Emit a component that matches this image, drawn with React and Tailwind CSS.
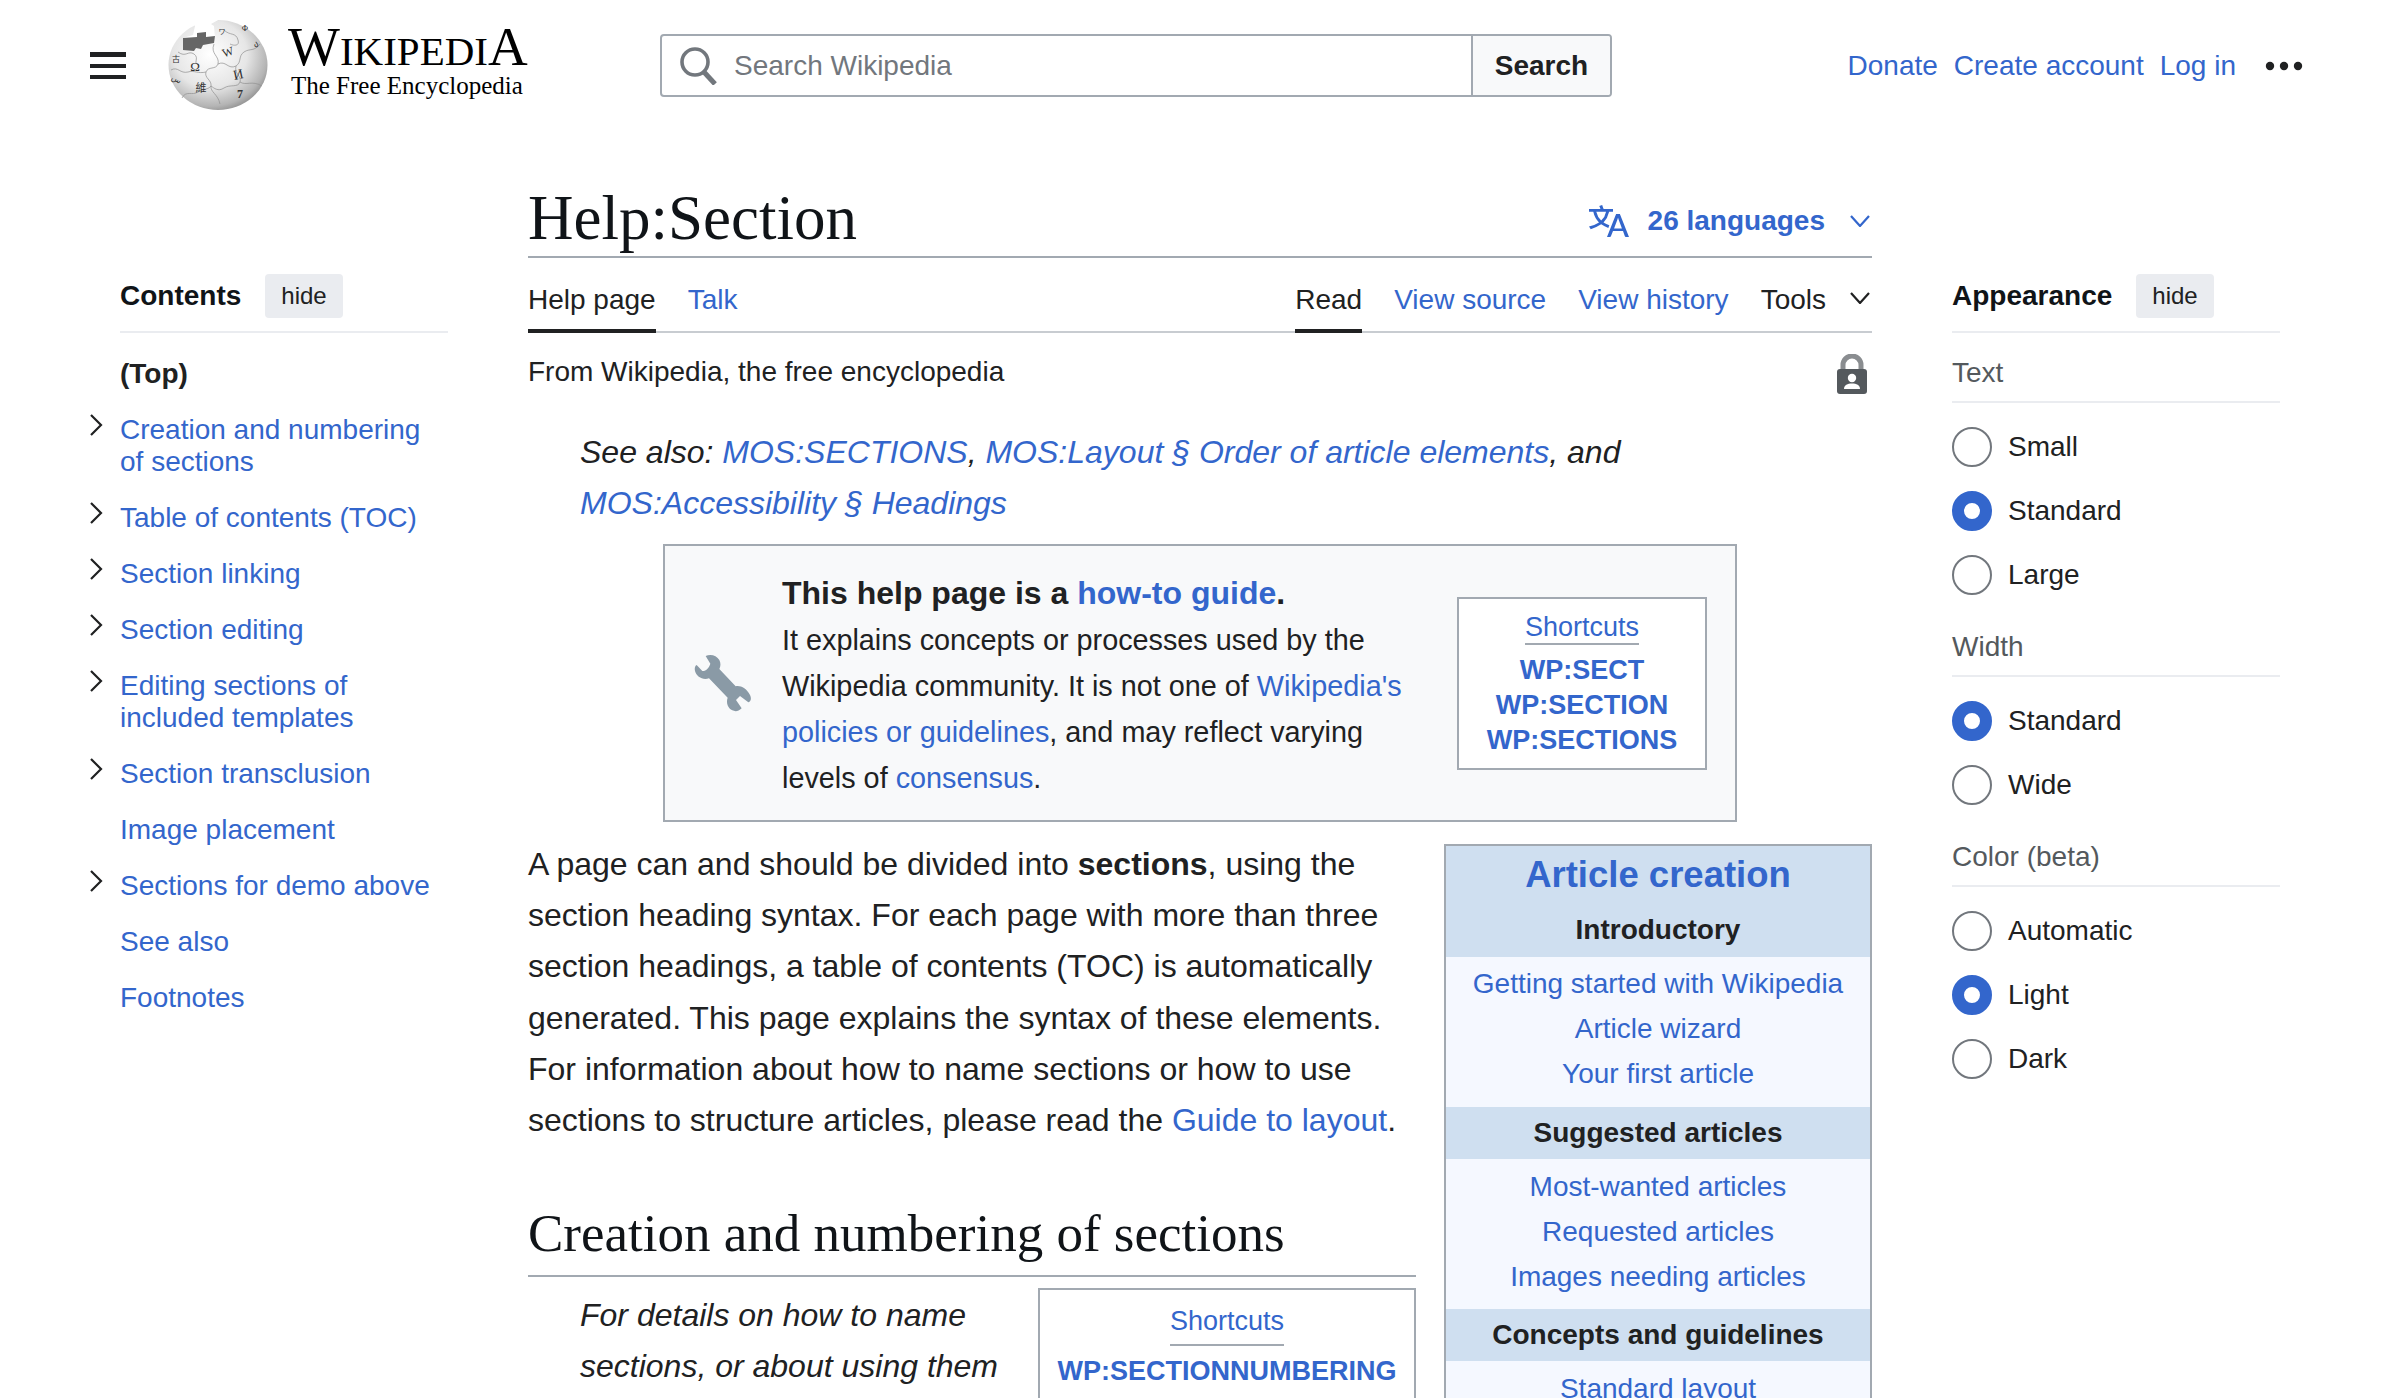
import React from 'react';

const tocItems = [
  { label: 'Creation and numbering of sections', arrow: true },
  { label: 'Table of contents (TOC)', arrow: true },
  { label: 'Section linking', arrow: true },
  { label: 'Section editing', arrow: true },
  { label: 'Editing sections of included templates', arrow: true },
  { label: 'Section transclusion', arrow: true },
  { label: 'Image placement', arrow: false },
  { label: 'Sections for demo above', arrow: true },
  { label: 'See also', arrow: false },
  { label: 'Footnotes', arrow: false },
];

const appearance = [
  { title: 'Text', options: [['Small', false], ['Standard', true], ['Large', false]] },
  { title: 'Width', options: [['Standard', true], ['Wide', false]] },
  { title: 'Color (beta)', options: [['Automatic', false], ['Light', true], ['Dark', false]] },
];

const navbox = [
  { title: 'Introductory', links: ['Getting started with Wikipedia', 'Article wizard', 'Your first article'] },
  { title: 'Suggested articles', links: ['Most-wanted articles', 'Requested articles', 'Images needing articles'] },
  { title: 'Concepts and guidelines', links: ['Standard layout'] },
];

const A = ({ children, className = '' }) => <a className={`text-[#3366cc] ${className}`}>{children}</a>;

const Chevron = ({ className = 'text-[#202122]' }) => (
  <svg width="20" height="12" viewBox="0 0 20 12" fill="none" stroke="currentColor" strokeWidth="2.2" className={className}>
    <path d="M1 1l9 10 9-10" />
  </svg>
);

const Globe = () => (
  <svg width="100" height="90" viewBox="0 0 100 90" className="shrink-0">
    <defs>
      <radialGradient id="globe" cx="0.42" cy="0.38" r="0.68">
        <stop offset="0" stopColor="#ffffff" />
        <stop offset="0.55" stopColor="#e6e6e6" />
        <stop offset="0.85" stopColor="#b4b4b4" />
        <stop offset="1" stopColor="#858585" />
      </radialGradient>
    </defs>
    <ellipse cx="50" cy="45" rx="49.5" ry="45" fill="url(#globe)" />
    <path d="M24 -1L27 6 25 15 15 18 15 30 47 18 46 6 43 4 52 -1z" fill="#fff" />
    <path d="M0 25L8 8 22 1 14 1 0 10z" fill="#fff" />
    <path d="M15 18L29 17 29 13 38 12 38 17 47 16 46 23 35 25 33 29 28 28 26 31 15 30z" fill="#666" />
    <g fill="none" stroke="#8f8f8f" strokeWidth="0.7">
      <path d="M10 32C18 38 20 30 26 34 32 38 24 44 31 45M46 24C42 34 52 36 50 44 48 50 40 46 38 52 36 58 44 60 43 66 42 72 50 74 52 84" />
      <path d="M50 44C58 40 60 50 68 46 74 42 70 36 76 32 82 28 86 32 92 24M68 46C66 54 74 56 72 62 70 68 62 64 56 68 50 72 46 68 43 66M72 62C78 66 84 60 94 66" />
      <path d="M3 50C10 46 12 54 20 52 26 50 30 54 38 52M14 78C18 70 24 76 30 72 36 68 40 70 43 66M56 10C62 16 68 12 70 20 72 26 66 26 62 24" />
    </g>
    <g fill="#333" fontFamily="'Liberation Serif', serif" textAnchor="middle">
      <text x="27" y="51" fontSize="13">Ω</text>
      <text x="60" y="36" fontSize="12" transform="rotate(-18 60 32)">W</text>
      <text x="70" y="59" fontSize="14" transform="rotate(-12 70 53)">И</text>
      <text x="33" y="72" fontSize="11" fontFamily="'Noto Sans CJK TC', sans-serif">維</text>
      <text x="72" y="78" fontSize="12" fontWeight="700">7</text>
      <text x="54" y="14" fontSize="7" fontFamily="'Noto Sans CJK JP', sans-serif">ワ</text>
      <text x="88" y="27" fontSize="9">ა</text>
      <text x="8" y="42" fontSize="8" fontFamily="'Noto Sans CJK SC', sans-serif">古</text>
      <text x="8" y="62" fontSize="8" transform="rotate(30 8 60)">&#1587;</text>
      <text x="77" y="11" fontSize="8">Ф</text>
    </g>
  </svg>
);

const SectionHead = ({ title }) => (
  <div className="flex items-center h-[44px] gap-[24px]">
    <span className="text-[28px] font-bold text-[#101418]">{title}</span>
    <button className="h-[44px] px-[16px] rounded-[4px] bg-[#eaecf0] text-[24px] text-[#202122]">hide</button>
  </div>
);

export default function App() {
  return (
    <div className="h-[1398px] overflow-hidden bg-white text-[#202122] [font-family:'Liberation_Sans',Arial,sans-serif]">
      {/* top bar */}
      <header className="flex items-start h-[176px] pl-[90px] pr-[97px]">
        <div className="flex flex-col gap-[7px] w-[36px] mt-[52px] shrink-0">
          <div className="h-[5px] bg-[#202122]" />
          <div className="h-[4px] bg-[#202122]" />
          <div className="h-[4px] bg-[#202122]" />
        </div>
        <div className="ml-[42px] mt-[20px]"><Globe /></div>
        <div className="ml-[20px] mt-[18px] w-[260px] shrink-0 [font-family:'Liberation_Serif',serif] text-black">
          <div className="h-[50px] leading-[58px] whitespace-nowrap">
            <span className="text-[55px]">W</span><span className="text-[41px]">IKIPEDI</span><span className="text-[55px]">A</span>
          </div>
          <div className="mt-[3px] ml-[3px] text-[25px] leading-[30px] whitespace-nowrap">The Free Encyclopedia</div>
        </div>
        <div className="ml-[112px] mt-[34px] flex w-[952px] h-[63px] shrink-0 rounded-[4px] border-2 border-[#a2a9b1]">
          <div className="flex items-center flex-1 pl-[18px] pt-[1px] gap-[16px] text-[28px] text-[#72777d]">
            <svg width="38" height="38" viewBox="0 0 38 38" fill="none" stroke="#72777d">
              <circle cx="15" cy="15" r="13" strokeWidth="3.6" />
              <path d="M24 25l11 12" strokeWidth="5" />
            </svg>
            Search Wikipedia
          </div>
          <button className="w-[139px] bg-[#f8f9fa] border-l-2 border-[#a2a9b1] text-[28px] font-bold text-[#202122] rounded-r-[2px]">Search</button>
        </div>
        <nav className="ml-auto mt-[48px] flex items-center text-[28px] leading-[36px]">
          <A>Donate</A>
          <A className="ml-[16px]">Create account</A>
          <A className="ml-[16px]">Log in</A>
          <svg width="38" height="10" viewBox="0 0 38 10" className="ml-[29px]" fill="#202122">
            <circle cx="5" cy="5" r="4.2" /><circle cx="19" cy="5" r="4.2" /><circle cx="33" cy="5" r="4.2" />
          </svg>
        </nav>
      </header>

      <div className="flex pl-[88px]">
        {/* contents */}
        <aside className="w-[360px] shrink-0 mt-[98px]">
          <div className="pl-[32px]">
            <SectionHead title="Contents" />
            <div className="h-[2px] mt-[13px] bg-[#eaecf0]" />
            <div className="mt-[25px] text-[28px] leading-[32px] font-bold">(Top)</div>
          </div>
          <ul className="mt-[24px] flex flex-col gap-[24px] text-[28px] leading-[32px]">
            {tocItems.map((item) => (
              <li key={item.label} className="flex">
                <div className="w-[32px] shrink-0">
                  {item.arrow && (
                    <svg width="16" height="22" viewBox="0 0 16 22" fill="none" stroke="#202122" strokeWidth="2.2">
                      <path d="M3 1l10 10L3 21" />
                    </svg>
                  )}
                </div>
                <A className="pr-[10px]">{item.label}</A>
              </li>
            ))}
          </ul>
        </aside>

        {/* article */}
        <main className="ml-[80px] w-[1344px] shrink-0">
          <div className="flex items-end h-[82px] border-b-2 border-[#a2a9b1]">
            <h1 className="text-[63px] leading-[76px] [font-family:'Liberation_Serif',serif] text-[#101418]">Help:Section</h1>
            <div className="ml-auto flex items-center h-[76px] pt-[6px] text-[#3366cc]">
              <svg width="40" height="40" viewBox="0 0 20 20" fill="currentColor">
                <path d="M20 18h-1.44a.6.6 0 0 1-.4-.12.8.8 0 0 1-.23-.31L17 15h-5l-1 2.54a.8.8 0 0 1-.22.3.6.6 0 0 1-.4.14H9l4.55-11.47h1.89zm-3.53-4.31L14.89 9.5a12 12 0 0 1-.39-1.24q-.09.37-.19.69l-.19.56-1.58 4.19zm-6.3-1.58a13.4 13.4 0 0 1-2.91-1.41 11.46 11.46 0 0 0 2.81-5.37H12V4H7.31a4 4 0 0 0-.2-.56C6.87 2.79 6.6 2 6.6 2l-1.47.5s.4.89.6 1.5H0v1.33h2.15A11.23 11.23 0 0 0 5 10.7a17.2 17.2 0 0 1-5 2.1q.56.82.87 1.38a23.3 23.3 0 0 0 5.22-2.51 15.6 15.6 0 0 0 3.56 1.77zM3.63 5.33h4.91a8.1 8.1 0 0 1-2.45 4.45 9.1 9.1 0 0 1-2.46-4.45" />
              </svg>
              <span className="ml-[19px] text-[28px] font-bold">26 languages</span>
              <Chevron className="ml-[25px] mr-[2px] text-[#3366cc]" />
            </div>
          </div>

          <div className="flex items-stretch h-[75px] border-b-2 border-[#c8ccd1] text-[28px]">
            <div className="flex gap-[32px]">
              <a className="relative pt-[21px] text-[#202122]">Help page<span className="absolute left-0 right-0 -bottom-[2px] h-[4px] bg-[#202122]" /></a>
              <A className="pt-[21px]">Talk</A>
            </div>
            <div className="ml-auto flex gap-[32px]">
              <a className="relative pt-[21px] text-[#202122]">Read<span className="absolute left-0 right-0 -bottom-[2px] h-[4px] bg-[#202122]" /></a>
              <A className="pt-[21px]">View source</A>
              <A className="pt-[21px]">View history</A>
              <div className="flex pt-[21px] text-[#202122]">
                Tools
                <Chevron className="ml-[24px] mr-[2px] mt-[13px]" />
              </div>
            </div>
          </div>

          <div className="flex justify-between mt-[21px] h-[42px]">
            <div className="text-[28px] leading-[36px]">From Wikipedia, the free encyclopedia</div>
            <svg width="30" height="40" viewBox="0 0 30 40" className="mr-[5px]">
              <path d="M6 18V11a9 9 0 0 1 18 0v7" fill="none" stroke="#8a8d90" strokeWidth="5" />
              <rect x="0" y="15" width="30" height="25" rx="3" fill="#54595d" />
              <circle cx="15" cy="24" r="4.2" fill="#fff" />
              <path d="M7 35c0-4 3.5-5.5 8-5.5s8 1.5 8 5.5z" fill="#fff" />
            </svg>
          </div>

          <p className="mt-[31px] pl-[52px] text-[32px] leading-[51px] italic">
            See also: <A>MOS:SECTIONS</A>, <A>MOS:Layout § Order of article elements</A>, and <A>MOS:Accessibility § Headings</A>
          </p>

          <div className="mx-[135px] mt-[15px] h-[278px] border-2 border-[#a2a9b1] bg-[#f8f9fa] flex items-center">
            <svg width="80" height="80" viewBox="0 0 240 240" className="ml-[20px] mt-[4px] shrink-0" fill="#8a9aa6">
              <path d="M62 33C75 26 95 30 103 45 108 55 107 65 103 72L152 124C165 120 185 130 195 150 200 160 198 170 190 172L165 153 153 165 170 190C160 200 150 200 142 196 130 190 122 175 128 158L72 100C52 106 35 95 30 78 28 70 30 62 35 60L52 78C60 80 72 70 76 56z" />
            </svg>
            <div className="ml-[17px] mt-[7px] w-[656px] shrink-0 text-[28.8px] leading-[46px]">
              <div className="text-[32px] font-bold leading-[42px] pb-[3px]">This help page is a <A>how-to guide</A>.</div>
              It explains concepts or processes used by the Wikipedia community. It is not one of <A>Wikipedia's policies or guidelines</A>, and may reflect varying levels of <A>consensus</A>.
            </div>
            <div className="ml-[19px] w-[250px] h-[173px] border-2 border-[#a2a9b1] bg-white flex flex-col items-center pt-[12px] text-[27px]">
              <A className="leading-[32px] border-b-2 border-[#a2a9b1]">Shortcuts</A>
              <div className="mt-[8px] text-center font-bold text-[27px] leading-[35px] text-[#3366cc]">
                WP:SECT<br />WP:SECTION<br />WP:SECTIONS
              </div>
            </div>
          </div>

          <div className="flex mt-[22px]">
            <div className="w-[888px] shrink-0">
              <p className="text-[32px] leading-[51.2px] -mt-[5px]">
                A page can and should be divided into <b>sections</b>, using the section heading syntax. For each page with more than three section headings, a table of contents (TOC) is automatically generated. This page explains the syntax of these elements. For information about how to name sections or how to use sections to structure articles, please read the <A>Guide to layout</A>.
              </p>
              <h2 className="mt-[56px] h-[75px] border-b-2 border-[#a2a9b1] text-[53px] leading-[62px] whitespace-nowrap [font-family:'Liberation_Serif',serif] text-[#101418]">Creation and numbering of sections</h2>
              <div className="flex justify-between mt-[11px]">
                <p className="pl-[52px] w-[510px] text-[32px] leading-[51px] italic pt-[2px]">For details on how to name sections, or about using them</p>
                <div className="w-[378px] h-[200px] shrink-0 border-2 border-[#a2a9b1] flex flex-col items-center pt-[15px] text-[27px]">
                  <A className="leading-[32px] pb-[7px] border-b-2 border-[#a2a9b1]">Shortcuts</A>
                  <div className="mt-[8px] font-bold text-[27px] leading-[35px] text-[#3366cc]">WP:SECTIONNUMBERING</div>
                </div>
              </div>
            </div>

            <div className="ml-[28px] w-[428px] h-[640px] shrink-0 border-2 border-b-0 border-[#a2a9b1] bg-[#f5f8ff] text-[28px] text-center">
              <div className="bg-[#cfdff0] h-[111px] pt-[6px]">
                <div className="text-[36.5px] leading-[46px] font-bold text-[#3366cc]">Article creation</div>
                <div className="mt-[10px] leading-[44px] font-bold">Introductory</div>
              </div>
              {navbox.map((group, i) => (
                <div key={group.title}>
                  {i > 0 && <div className="bg-[#cfdff0] h-[52px] leading-[52px] font-bold">{group.title}</div>}
                  <div className={i === 0 ? 'pt-[4px] pb-[11px] leading-[45px] text-[#3366cc]' : 'pt-[5px] pb-[10px] leading-[45px] text-[#3366cc]'}>
                    {group.links.map((link) => <div key={link}>{link}</div>)}
                  </div>
                </div>
              ))}
            </div>
          </div>
        </main>

        {/* appearance */}
        <aside className="ml-[80px] w-[328px] shrink-0 mt-[98px]">
          <SectionHead title="Appearance" />
          <div className="h-[2px] mt-[13px] bg-[#eaecf0]" />
          {appearance.map((group) => (
            <div key={group.title} className="mt-[24px]">
              <div className="text-[28px] leading-[32px] text-[#54595d]">{group.title}</div>
              <div className="h-[2px] mt-[12px] bg-[#eaecf0]" />
              <div className="mt-[24px] flex flex-col gap-[24px] mb-[36px]">
                {group.options.map(([label, checked]) => (
                  <label key={label} className="flex items-center gap-[16px] h-[40px] text-[28px]">
                    <span className={checked ? 'w-[40px] h-[40px] rounded-full border-[12px] border-[#3366cc] bg-white' : 'w-[40px] h-[40px] rounded-full border-2 border-[#72777d] bg-white'} />
                    {label}
                  </label>
                ))}
              </div>
            </div>
          ))}
        </aside>
      </div>
    </div>
  );
}
